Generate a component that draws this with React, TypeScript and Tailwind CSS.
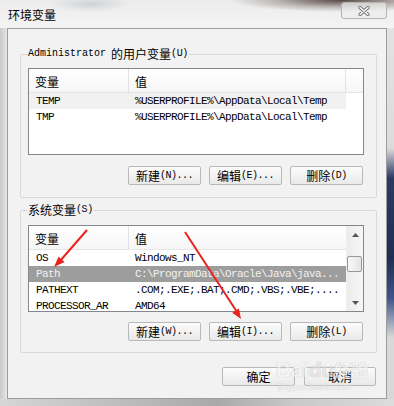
import React from "react";

const Btn = ({ cjk, mono, w = "w-[73px]" }: { cjk: string; mono?: string; w?: string }) => (
  <div
    className={`${w} h-[19px] border border-[#b9b9b9] rounded-[2px] bg-gradient-to-b from-[#fcfcfc] to-[#e9e9e9] flex items-center justify-center text-black`}
  >
    <span className="font-['Noto_Sans_CJK_SC',sans-serif] text-[12px] leading-none">{cjk}</span>
    {mono && (
      <span className="font-['Liberation_Mono',monospace] text-[10px] leading-none tracking-[-0.5px]">{mono}</span>
    )}
  </div>
);

const Header = ({ full }: { full?: boolean }) => (
  <div className="h-[24px] shrink-0 flex border-b border-[#e5e5e5] bg-gradient-to-b from-white to-[#f6f6f6] font-['Noto_Sans_CJK_SC',sans-serif] text-[12px] text-black">
    <div className="w-[100px] border-r border-[#e2e2e2] pl-[6px] pt-[3px] flex items-center">变量</div>
    <div className={`${full ? "w-[217px] border-r border-[#e2e2e2]" : "flex-1"} pl-[6px] pt-[3px] flex items-center`}>值</div>
    {full && <div className="flex-1" />}
  </div>
);

const Row = ({ a, b, bg = "" }: { a: string; b: string; bg?: string }) => (
  <div className={`h-[16px] shrink-0 flex items-center w-[317px] whitespace-nowrap overflow-hidden font-['Liberation_Mono',monospace] text-[11px] tracking-[-0.6px] ${bg}`}>
    <div className="w-[100px] pl-[7px]">{a}</div>
    <div className="flex-1 pl-[6px]">{b}</div>
  </div>
);

const GroupLabel = ({ children }: { children: React.ReactNode }) => (
  <div className="absolute -top-[8px] left-[6px] px-[1px] bg-[#f2f2f2] flex items-center text-black leading-none h-[14px]">
    {children}
  </div>
);

export default function App() {
  return (
    <div className="w-[394px] h-[406px] relative overflow-hidden flex flex-col bg-[#e3e3e3] select-none">
      {/* title bar */}
      <div className="h-[28px] shrink-0 flex items-start justify-between bg-[image:radial-gradient(ellipse_110px_12px_at_340px_0px,rgba(70,55,50,0.9),rgba(120,105,100,0.4)_60%,transparent),radial-gradient(ellipse_40px_8px_at_90px_4px,rgba(150,160,175,0.35),transparent),linear-gradient(to_bottom,#ececec,#f4f4f4)]">
        <div className="pl-[8px] pt-[7px] font-['Noto_Sans_CJK_SC',sans-serif] text-[12px] text-black leading-[16px]">环境变量</div>
        <div className="mr-[7px] mt-[2px] w-[46px] h-[17px] border border-[#b4b4b4] rounded-[3px] bg-[#ececec]/70 flex items-center justify-center">
          <svg width="12" height="10" viewBox="0 0 12 10">
            <path d="M2 1.5 L10 8.5 M10 1.5 L2 8.5" stroke="#6b6b6b" strokeWidth="3.2" strokeLinecap="round" />
            <path d="M2 1.5 L10 8.5 M10 1.5 L2 8.5" stroke="#ffffff" strokeWidth="1.6" strokeLinecap="round" />
          </svg>
        </div>
      </div>

      {/* middle row */}
      <div className="flex-1 flex">
        <div className="w-[7px] bg-gradient-to-r from-[#c9c9c9] to-[#e6e6e6]" />
        {/* client */}
        <div className="w-[380px] border border-[#9c9c9c] bg-[#f2f2f2] flex flex-col">
          {/* group 1 */}
          <div className="relative mt-[25px] ml-[12px] w-[357px] h-[144px] border border-[#d9d9d9] rounded-[2px] flex flex-col pl-[7px] pt-[13px]">
            <GroupLabel>
              <span className="font-['Liberation_Mono',monospace] text-[10px]">Administrator </span>
              <span className="font-['Noto_Sans_CJK_SC',sans-serif] text-[12px] ml-[5px]">的用户变量</span>
              <span className="font-['Liberation_Mono',monospace] text-[10px] tracking-[-0.4px]">(U)</span>
            </GroupLabel>
            <div className="w-[336px] h-[87px] border border-[#828790] bg-white flex flex-col overflow-hidden">
              <Header full />
              <Row a="TEMP" b="%USERPROFILE%\AppData\Local\Temp" bg="bg-[#f1f1f1]" />
              <Row a="TMP" b="%USERPROFILE%\AppData\Local\Temp" />
            </div>
            <div className="mt-[11px] w-[336px] flex justify-end gap-[8px] pr-[1px]">
              <Btn cjk="新建" mono="(N)..." />
              <Btn cjk="编辑" mono="(E)..." />
              <Btn cjk="删除" mono="(D)" />
            </div>
          </div>

          {/* group 2 */}
          <div className="relative mt-[12px] ml-[12px] w-[357px] h-[143px] border border-[#d9d9d9] rounded-[2px] flex flex-col pl-[7px] pt-[14px]">
            <GroupLabel>
              <span className="font-['Noto_Sans_CJK_SC',sans-serif] text-[12px]">系统变量</span>
              <span className="font-['Liberation_Mono',monospace] text-[10px] tracking-[-0.4px]">(S)</span>
            </GroupLabel>
            <div className="w-[336px] h-[87px] border border-[#828790] bg-white flex overflow-hidden">
              <div className="w-[317px] flex flex-col overflow-hidden">
                <Header />
                <Row a="OS" b="Windows_NT" />
                <Row a="Path" b="C:\ProgramData\Oracle\Java\java..." bg="bg-[#9d9d9d] text-[#f2f2f2]" />
                <Row a="PATHEXT" b=".COM;.EXE;.BAT;.CMD;.VBS;.VBE;...." />
                <Row a="PROCESSOR_AR" b="AMD64" />
              </div>
              <div className="w-[17px] flex flex-col bg-gradient-to-r from-[#ececec] to-[#f6f6f6] border-l border-[#f0f0f0]">
                <div className="h-[17px] flex items-center justify-center">
                  <svg width="7" height="4" viewBox="0 0 7 4"><path d="M3.5 0 L7 4 L0 4 Z" fill="#555" /></svg>
                </div>
                <div className="flex-1 flex flex-col">
                  <div className="mt-[13px] h-[16px] w-[15px] border border-[#979797] rounded-[2px] bg-gradient-to-r from-[#f8f8f8] to-[#e4e4e4]" />
                </div>
                <div className="h-[17px] flex items-center justify-center">
                  <svg width="7" height="4" viewBox="0 0 7 4"><path d="M0 0 L7 0 L3.5 4 Z" fill="#555" /></svg>
                </div>
              </div>
            </div>
            <div className="mt-[10px] w-[336px] flex justify-end gap-[8px] pr-[1px]">
              <Btn cjk="新建" mono="(W)..." />
              <Btn cjk="编辑" mono="(I)..." />
              <Btn cjk="删除" mono="(L)" />
            </div>
          </div>

          {/* OK / Cancel */}
          <div className="mt-[14px] mr-[10px] flex justify-end gap-[9px]">
            <Btn cjk="确定" w="w-[73px]" />
            <Btn cjk="取消" w="w-[72px]" />
          </div>
        </div>
        <div className="w-[7px] bg-[image:linear-gradient(to_bottom,#e2e2e2_0px,#dcdcdc_120px,#2a3b63_150px,#1f2f52_230px,#3d5588_270px,#d8d8d8_310px)]" />
      </div>
      <div className="h-[7px] shrink-0 bg-[image:linear-gradient(to_right,#d6d6d6,#bdbdbd_30%,#a9a9a9_55%,#c9c9c9_75%,#dcdcdc)]" />

      {/* watermark */}
      <div className="absolute left-[276px] top-[358px] pointer-events-none opacity-60">
        <div className="font-['Liberation_Sans',sans-serif] font-bold text-[21px] leading-[24px] text-[#f6f6f6] [text-shadow:0_0_1px_#b5b5b5,0_0_1px_#b5b5b5]">
          Bai<span className="text-[#dcdcdc]">du</span><span className="font-['Noto_Sans_CJK_SC',sans-serif] text-[17px]">经验</span>
        </div>
        <div className="font-['Liberation_Sans',sans-serif] text-[9px] leading-[10px] text-[#e9e9e9] [text-shadow:0_0_1px_#bdbdbd] pl-[2px]">jingyan.baidu.com</div>
      </div>

      {/* red arrows */}
      <svg className="absolute left-0 top-0 pointer-events-none" width="394" height="406" viewBox="0 0 394 406">
        <line x1="87" y1="230" x2="60" y2="261" stroke="#e8231e" strokeWidth="2" />
        <polygon points="54,267 64.6,262.1 58.5,256.8" fill="#e8231e" />
        <line x1="185" y1="232" x2="237" y2="312" stroke="#e8231e" strokeWidth="2" />
        <polygon points="241,319 238.9,308.4 232.2,312.8" fill="#e8231e" />
      </svg>
    </div>
  );
}
